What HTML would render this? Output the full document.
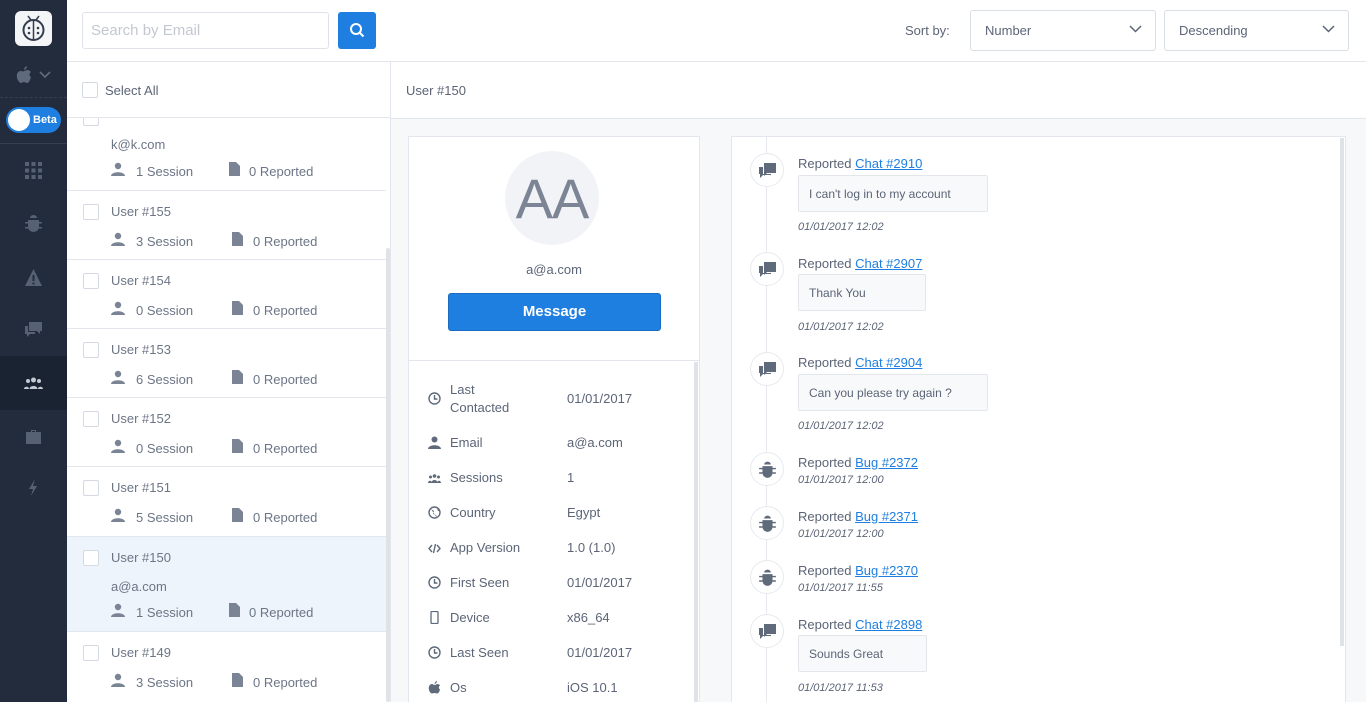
<!DOCTYPE html>
<html><head><meta charset="utf-8"><style>
*{box-sizing:border-box;margin:0;padding:0}
html{width:1366px;height:702px;overflow:hidden}
body{width:1366px;height:702px;overflow:hidden;font-family:"Liberation Sans",sans-serif;color:#5b6577;background:#f7f8fa;position:relative;font-size:13px}
.a{position:absolute}
.side{left:0;top:0;width:67px;height:702px;background:#222c3c}
.ic{position:absolute;left:24px;width:19px;height:19px;fill:#566274}
.cb{position:absolute;width:16px;height:16px;border:1px solid #d5dae2;background:#fff;border-radius:2px}
.row{position:absolute;left:67px;width:319px;border-bottom:1px solid #e3e7ed;background:#fff}
.row .t{position:absolute;left:44px;font-size:13px;color:#6c7586}
.row svg{position:absolute;fill:#7a8494}
.lbl{position:absolute;left:450px;font-size:13px;color:#5b6577}
.val{position:absolute;left:567px;font-size:13px;color:#5b6577}
.di{position:absolute;left:428px;width:13px;height:13px;fill:#5f6a7b}
.tl{position:absolute;left:750px;width:34px;height:34px;border-radius:50%;background:#fff;border:1px solid #e6e9ee}
.tl svg{position:absolute;left:7px;top:7px;width:19px;height:19px;fill:#5f6a7b}
.rp{position:absolute;left:798px;font-size:13px;color:#5b6577}
.rp a{color:#1f7fe0;text-decoration:underline}
.bub{position:absolute;left:798px;height:37px;border:1px solid #e3e6eb;background:#f8f9fa;border-radius:2px;font-size:12px;color:#5b6577;padding:11px 10px}
.dt{position:absolute;left:798px;font-size:11px;font-style:italic;color:#5b6577}
</style></head><body>
<div class="a side"></div>
<div class="a" style="left:15px;top:11px;width:37px;height:35px;background:#f4f5f7;border-radius:6px"></div>
<svg class="a" style="left:20px;top:13px" width="27" height="30" viewBox="0 0 27 30"><circle cx="13.5" cy="17" r="10" fill="none" stroke="#333d4d" stroke-width="2"/><line x1="13.5" y1="7" x2="13.5" y2="27" stroke="#333d4d" stroke-width="1.5"/><path d="M8 3l3 4M19 3l-3 4" stroke="#333d4d" stroke-width="1.5"/><circle cx="9" cy="15" r="1.3" fill="#333d4d"/><circle cx="18" cy="15" r="1.3" fill="#333d4d"/><circle cx="9" cy="20" r="1.3" fill="#333d4d"/><circle cx="18" cy="20" r="1.3" fill="#333d4d"/></svg>
<svg class="a" style="left:16px;top:66px" width="16" height="18" viewBox="0 0 16 18"><path fill="#5f6b7c" d="M8 5c1-0 2-1 3-1 2 0 3 1 4 2-2 1-2 4 0 5-1 3-2 6-4 6-1 0-2-1-3-1s-2 1-3 1C3 17 0 12 1 8c1-2 2-3 4-3 1 0 2 1 3 0zM8 4c0-2 1-3 3-4 0 2-1 3-3 4z"/></svg>
<svg class="a" style="left:39px;top:71px" width="12" height="8"><path d="M1 1l5 5 5-5" stroke="#5f6b7c" stroke-width="1.6" fill="none"/></svg>
<div class="a" style="left:0;top:97px;width:67px;border-top:1px dashed #34404f"></div>
<div class="a" style="left:6px;top:107px;width:55px;height:26px;border-radius:13px;background:#1f7fe0"></div>
<div class="a" style="left:8px;top:109px;width:22px;height:22px;border-radius:50%;background:#fff"></div>
<div class="a" style="left:33px;top:114px;color:#fff;font-size:11px;font-weight:bold">Beta</div>
<div class="a" style="left:0;top:143px;width:67px;border-top:1px solid #34404f"></div>
<svg class="ic" style="top:161px" viewBox="0 0 19 19"><g><rect x="1" y="1" width="4" height="4"/><rect x="7.5" y="1" width="4" height="4"/><rect x="14" y="1" width="4" height="4"/><rect x="1" y="7.5" width="4" height="4"/><rect x="7.5" y="7.5" width="4" height="4"/><rect x="14" y="7.5" width="4" height="4"/><rect x="1" y="14" width="4" height="4"/><rect x="7.5" y="14" width="4" height="4"/><rect x="14" y="14" width="4" height="4"/></g></svg>
<svg class="ic" style="top:214px" viewBox="0 0 19 19"><path d="M6 4a3.5 3 0 0 1 7 0zM4 6h11v7a5.5 5 0 0 1-11 0zM1 8h3v1.5H1zM15 8h3v1.5h-3zM1 13h3v1.5H1zM15 13h3v1.5h-3z"/></svg>
<svg class="ic" style="top:268px" viewBox="0 0 19 19"><path d="M9.5 1L18 18H1zM8.5 7v6h2V7zm0 7.5v2h2v-2z" fill-rule="evenodd"/></svg>
<svg class="ic" style="top:320px" viewBox="0 0 19 19"><path d="M5 2h13v9h-2v3l-3-3H5zM1 6h3v6h7v2H6l-3 3v-3H1z"/></svg>
<div class="a" style="left:0;top:356px;width:67px;height:54px;background:#1a2331"></div>
<svg class="ic" style="top:374px;fill:#c4cad3" viewBox="0 0 19 19"><circle cx="9.5" cy="6" r="2.5"/><circle cx="4" cy="7" r="2"/><circle cx="15" cy="7" r="2"/><path d="M5.5 15c0-4 8-4 8 0zM0 15c0-3 5-3 5 0zM14 15c0-3 5-3 5 0z"/></svg>
<svg class="ic" style="top:427px" viewBox="0 0 19 19"><path d="M7 3h5v2h5v12H2V5h5zm1 1v1h3V4z"/></svg>
<svg class="ic" style="top:478px" viewBox="0 0 19 19"><path d="M11 1L5 11h4l-2 7 6-10H9z"/></svg>

<div class="a" style="left:67px;top:0;width:1299px;height:62px;background:#fff;border-bottom:1px solid #e3e7ed"></div>
<div class="a" style="left:82px;top:12px;width:247px;height:37px;border:1px solid #dfe3e9;border-radius:3px;background:#fff;color:#c3c8d0;font-size:15px;padding:9px 8px">Search by Email</div>
<div class="a" style="left:338px;top:12px;width:38px;height:37px;background:#1f7fe0;border-radius:3px"></div>
<svg class="a" style="left:349px;top:22px" width="16" height="16"><circle cx="7" cy="7" r="5" stroke="#fff" stroke-width="2" fill="none"/><path d="M10.5 10.5l4 4" stroke="#fff" stroke-width="2"/></svg>
<div class="a" style="left:905px;top:23px;font-size:13px;color:#5b6577">Sort by:</div>
<div class="a" style="left:970px;top:10px;width:186px;height:41px;border:1px solid #d9dde4;border-radius:3px;background:#fff;padding:12px 14px;font-size:13px">Number</div>
<svg class="a" style="left:1129px;top:25px" width="13" height="8"><path d="M1 1l5.5 5.5L12 1" stroke="#5b6577" stroke-width="1.5" fill="none"/></svg>
<div class="a" style="left:1164px;top:10px;width:185px;height:41px;border:1px solid #d9dde4;border-radius:3px;background:#fff;padding:12px 14px;font-size:13px">Descending</div>
<svg class="a" style="left:1322px;top:25px" width="13" height="8"><path d="M1 1l5.5 5.5L12 1" stroke="#5b6577" stroke-width="1.5" fill="none"/></svg>

<div class="a" style="left:67px;top:62px;width:324px;height:640px;background:#fff;border-right:1px solid #e3e7ed"></div>
<div class="a" style="left:391px;top:62px;width:975px;height:57px;background:#fff;border-bottom:1px solid #e3e7ed"></div>
<div class="a" style="left:406px;top:83px;font-size:13px">User #150</div>
<div class="row" style="top:118px;height:73px"><div class="cb" style="left:16px;top:-8px"></div><div class="t" style="top:19px">k@k.com</div>
<svg style="left:44px;top:44px" width="14" height="14" viewBox="0 0 14 14"><circle cx="7" cy="4" r="3.2"/><path d="M0 14c0-5 14-5 14 0z"/></svg><div class="t" style="left:69px;top:46px">1 Session</div>
<svg style="left:162px;top:44px" width="11" height="14" viewBox="0 0 11 14"><path d="M0 0h7l4 4v10H0z"/></svg><div class="t" style="left:182px;top:46px">0 Reported</div></div>
<div class="a" style="left:67px;top:62px;width:323px;height:56px;background:#fff;border-bottom:1px solid #e3e7ed"></div>
<div class="cb" style="left:82px;top:82px"></div>
<div class="a" style="left:105px;top:83px;font-size:13px">Select All</div>

<div class="row" style="top:191px;height:69px"><div class="cb" style="left:16px;top:13px"></div><div class="t" style="top:13px">User #155</div><svg style="left:44px;top:41px" width="14" height="14" viewBox="0 0 14 14"><circle cx="7" cy="4" r="3.2"/><path d="M0 14c0-5 14-5 14 0z"/></svg><div class="t" style="left:69px;top:43px">3 Session</div><svg style="left:165px;top:41px" width="11" height="14" viewBox="0 0 11 14"><path d="M0 0h7l4 4v10H0z"/></svg><div class="t" style="left:186px;top:43px">0 Reported</div></div>
<div class="row" style="top:260px;height:69px"><div class="cb" style="left:16px;top:13px"></div><div class="t" style="top:13px">User #154</div><svg style="left:44px;top:41px" width="14" height="14" viewBox="0 0 14 14"><circle cx="7" cy="4" r="3.2"/><path d="M0 14c0-5 14-5 14 0z"/></svg><div class="t" style="left:69px;top:43px">0 Session</div><svg style="left:165px;top:41px" width="11" height="14" viewBox="0 0 11 14"><path d="M0 0h7l4 4v10H0z"/></svg><div class="t" style="left:186px;top:43px">0 Reported</div></div>
<div class="row" style="top:329px;height:69px"><div class="cb" style="left:16px;top:13px"></div><div class="t" style="top:13px">User #153</div><svg style="left:44px;top:41px" width="14" height="14" viewBox="0 0 14 14"><circle cx="7" cy="4" r="3.2"/><path d="M0 14c0-5 14-5 14 0z"/></svg><div class="t" style="left:69px;top:43px">6 Session</div><svg style="left:165px;top:41px" width="11" height="14" viewBox="0 0 11 14"><path d="M0 0h7l4 4v10H0z"/></svg><div class="t" style="left:186px;top:43px">0 Reported</div></div>
<div class="row" style="top:398px;height:69px"><div class="cb" style="left:16px;top:13px"></div><div class="t" style="top:13px">User #152</div><svg style="left:44px;top:41px" width="14" height="14" viewBox="0 0 14 14"><circle cx="7" cy="4" r="3.2"/><path d="M0 14c0-5 14-5 14 0z"/></svg><div class="t" style="left:69px;top:43px">0 Session</div><svg style="left:165px;top:41px" width="11" height="14" viewBox="0 0 11 14"><path d="M0 0h7l4 4v10H0z"/></svg><div class="t" style="left:186px;top:43px">0 Reported</div></div>
<div class="row" style="top:467px;height:70px"><div class="cb" style="left:16px;top:13px"></div><div class="t" style="top:13px">User #151</div><svg style="left:44px;top:41px" width="14" height="14" viewBox="0 0 14 14"><circle cx="7" cy="4" r="3.2"/><path d="M0 14c0-5 14-5 14 0z"/></svg><div class="t" style="left:69px;top:43px">5 Session</div><svg style="left:165px;top:41px" width="11" height="14" viewBox="0 0 11 14"><path d="M0 0h7l4 4v10H0z"/></svg><div class="t" style="left:186px;top:43px">0 Reported</div></div>
<div class="row" style="top:537px;height:95px;background:#edf4fb"><div class="cb" style="left:16px;top:13px"></div><div class="t" style="top:13px">User #150</div><div class="t" style="top:42px">a@a.com</div><svg style="left:44px;top:66px" width="14" height="14" viewBox="0 0 14 14"><circle cx="7" cy="4" r="3.2"/><path d="M0 14c0-5 14-5 14 0z"/></svg><div class="t" style="left:69px;top:68px">1 Session</div><svg style="left:162px;top:66px" width="11" height="14" viewBox="0 0 11 14"><path d="M0 0h7l4 4v10H0z"/></svg><div class="t" style="left:182px;top:68px">0 Reported</div></div>
<div class="row" style="top:632px;height:70px;border-bottom:none"><div class="cb" style="left:16px;top:13px"></div><div class="t" style="top:13px">User #149</div><svg style="left:44px;top:41px" width="14" height="14" viewBox="0 0 14 14"><circle cx="7" cy="4" r="3.2"/><path d="M0 14c0-5 14-5 14 0z"/></svg><div class="t" style="left:69px;top:43px">3 Session</div><svg style="left:165px;top:41px" width="11" height="14" viewBox="0 0 11 14"><path d="M0 0h7l4 4v10H0z"/></svg><div class="t" style="left:186px;top:43px">0 Reported</div></div>
<div class="a" style="left:386px;top:248px;width:4px;height:454px;background:#dfe3e8;border-radius:2px"></div>

<div class="a" style="left:408px;top:136px;width:292px;height:566px;background:#fff;border:1px solid #e3e7ed;border-bottom:none"></div>
<div class="a" style="left:409px;top:360px;width:290px;border-top:1px solid #e3e7ed"></div>
<div class="a" style="left:694px;top:362px;width:4px;height:340px;background:#dfe3e8"></div>
<div class="a" style="left:505px;top:151px;width:94px;height:94px;border-radius:50%;background:#f2f3f7"></div>
<div class="a" style="left:505px;top:166px;width:94px;text-align:center;font-size:56px;color:#7c8595;letter-spacing:-1px">AA</div>
<div class="a" style="left:408px;top:262px;width:292px;text-align:center;font-size:13px">a@a.com</div>
<div class="a" style="left:448px;top:293px;width:213px;height:38px;background:#1f7fe0;border:1px solid #1a6cc2;border-radius:3px;color:#fff;font-size:15px;font-weight:bold;text-align:center;line-height:36px">Message</div>

<svg class="di" style="top:392px" viewBox="0 0 13 13"><circle cx="6.5" cy="6.5" r="5.5" fill="none" stroke="#5f6a7b" stroke-width="1.4"/><path d="M6.5 3v4h3" stroke="#5f6a7b" stroke-width="1.4" fill="none"/></svg>
<div class="lbl" style="top:381px;line-height:18px">Last<br>Contacted</div><div class="val" style="top:391px">01/01/2017</div>
<svg class="di" style="top:436px" viewBox="0 0 13 13"><circle cx="6.5" cy="3.5" r="3"/><path d="M0 13c0-5 13-5 13 0z"/></svg>
<div class="lbl" style="top:435px">Email</div><div class="val" style="top:435px">a@a.com</div>
<svg class="di" style="top:471px" viewBox="0 0 13 13"><circle cx="6.5" cy="5" r="1.8"/><circle cx="2.5" cy="6" r="1.5"/><circle cx="10.5" cy="6" r="1.5"/><path d="M3.5 12c0-4 6-4 6 0zM0 12c0-3 4-3 4 0zM9 12c0-3 4-3 4 0z"/></svg>
<div class="lbl" style="top:470px">Sessions</div><div class="val" style="top:470px">1</div>
<svg class="di" style="top:506px" viewBox="0 0 13 13"><circle cx="6.5" cy="6.5" r="5.5" fill="none" stroke="#5f6a7b" stroke-width="1.4"/><path d="M3 3l3 2-1 3 3 1 1 3M9 2l1 3 2 0"/></svg>
<div class="lbl" style="top:505px">Country</div><div class="val" style="top:505px">Egypt</div>
<svg class="di" style="top:542px" viewBox="0 0 13 13"><path d="M4 3L1 6.5 4 10M9 3l3 3.5L9 10M7.5 2l-2 9" stroke="#5f6a7b" stroke-width="1.4" fill="none"/></svg>
<div class="lbl" style="top:540px">App Version</div><div class="val" style="top:540px">1.0 (1.0)</div>
<svg class="di" style="top:576px" viewBox="0 0 13 13"><circle cx="6.5" cy="6.5" r="5.5" fill="none" stroke="#5f6a7b" stroke-width="1.4"/><path d="M6.5 3v4h3" stroke="#5f6a7b" stroke-width="1.4" fill="none"/></svg>
<div class="lbl" style="top:575px">First Seen</div><div class="val" style="top:575px">01/01/2017</div>
<svg class="di" style="top:611px" viewBox="0 0 13 13"><rect x="3" y="0.5" width="7" height="12" rx="1" fill="none" stroke="#5f6a7b" stroke-width="1.3"/></svg>
<div class="lbl" style="top:610px">Device</div><div class="val" style="top:610px">x86_64</div>
<svg class="di" style="top:646px" viewBox="0 0 13 13"><circle cx="6.5" cy="6.5" r="5.5" fill="none" stroke="#5f6a7b" stroke-width="1.4"/><path d="M6.5 3v4h3" stroke="#5f6a7b" stroke-width="1.4" fill="none"/></svg>
<div class="lbl" style="top:645px">Last Seen</div><div class="val" style="top:645px">01/01/2017</div>
<svg class="di" style="top:681px" viewBox="0 0 13 13"><path d="M6.5 4c1 0 2-1 3-1s2 .5 2.5 1.5c-1.5 1-1.5 3 0 4-.5 2-1.5 4-3 4-1 0-1.5-.5-2.5-.5s-1.5.5-2.5.5C2 12.5 0 8 1 5.5 1.5 4 2.5 3 4 3c1 0 1.5 1 2.5 1zM6.5 3c0-1.5 1-2.5 2.5-3 0 1.5-1 2.5-2.5 3z"/></svg>
<div class="lbl" style="top:680px">Os</div><div class="val" style="top:680px">iOS 10.1</div>

<div class="a" style="left:731px;top:136px;width:615px;height:566px;background:#fff;border:1px solid #e3e7ed;border-bottom:none"></div>
<div class="a" style="left:1340px;top:138px;width:4px;height:508px;background:#dfe3e8"></div>
<div class="a" style="left:766px;top:137px;width:1px;height:565px;background:#e6e9ee"></div>

<div class="tl" style="top:153px"><svg viewBox="0 0 19 19"><path d="M6 2h12v10h-9l-3 3zM1 6h4v7h8v1l-8 0-3 3v-4H1z"/></svg></div>
<div class="rp" style="top:156px">Reported <a>Chat #2910</a></div>
<div class="bub" style="top:175px;width:190px">I can't log in to my account</div>
<div class="dt" style="top:221px">01/01/2017 12:02</div>

<div class="tl" style="top:252px"><svg viewBox="0 0 19 19"><path d="M6 2h12v10h-9l-3 3zM1 6h4v7h8v1l-8 0-3 3v-4H1z"/></svg></div>
<div class="rp" style="top:256px">Reported <a>Chat #2907</a></div>
<div class="bub" style="top:274px;width:128px">Thank You</div>
<div class="dt" style="top:321px">01/01/2017 12:02</div>

<div class="tl" style="top:352px"><svg viewBox="0 0 19 19"><path d="M6 2h12v10h-9l-3 3zM1 6h4v7h8v1l-8 0-3 3v-4H1z"/></svg></div>
<div class="rp" style="top:355px">Reported <a>Chat #2904</a></div>
<div class="bub" style="top:374px;width:190px">Can you please try again ?</div>
<div class="dt" style="top:420px">01/01/2017 12:02</div>

<div class="tl" style="top:452px"><svg viewBox="0 0 17 17"><path d="M5.5 4a3 2.5 0 0 1 6 0zM4 5.5h9v6a4.5 4.5 0 0 1-9 0zM1 7h3v1.3H1zM13 7h3v1.3h-3zM1 11h3v1.3H1zM13 11h3v1.3h-3z"/></svg></div>
<div class="rp" style="top:455px">Reported <a>Bug #2372</a></div>
<div class="dt" style="top:474px">01/01/2017 12:00</div>
<div class="tl" style="top:506px"><svg viewBox="0 0 17 17"><path d="M5.5 4a3 2.5 0 0 1 6 0zM4 5.5h9v6a4.5 4.5 0 0 1-9 0zM1 7h3v1.3H1zM13 7h3v1.3h-3zM1 11h3v1.3H1zM13 11h3v1.3h-3z"/></svg></div>
<div class="rp" style="top:509px">Reported <a>Bug #2371</a></div>
<div class="dt" style="top:528px">01/01/2017 12:00</div>
<div class="tl" style="top:560px"><svg viewBox="0 0 17 17"><path d="M5.5 4a3 2.5 0 0 1 6 0zM4 5.5h9v6a4.5 4.5 0 0 1-9 0zM1 7h3v1.3H1zM13 7h3v1.3h-3zM1 11h3v1.3H1zM13 11h3v1.3h-3z"/></svg></div>
<div class="rp" style="top:563px">Reported <a>Bug #2370</a></div>
<div class="dt" style="top:582px">01/01/2017 11:55</div>

<div class="tl" style="top:614px"><svg viewBox="0 0 19 19"><path d="M6 2h12v10h-9l-3 3zM1 6h4v7h8v1l-8 0-3 3v-4H1z"/></svg></div>
<div class="rp" style="top:617px">Reported <a>Chat #2898</a></div>
<div class="bub" style="top:635px;width:129px">Sounds Great</div>
<div class="dt" style="top:682px">01/01/2017 11:53</div>
</body></html>
